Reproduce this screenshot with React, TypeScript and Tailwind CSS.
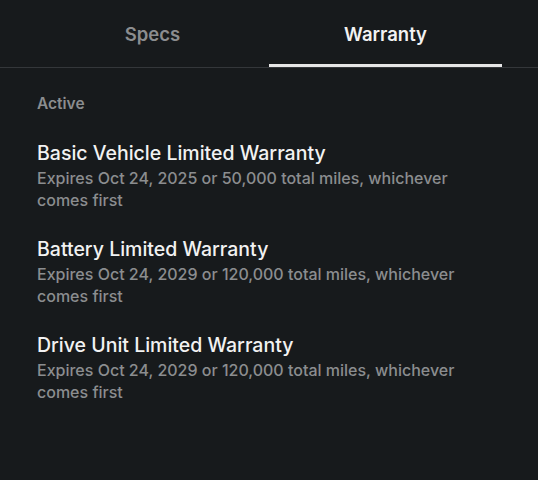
import React from "react";

const items = [
  { title: "Basic Vehicle Limited Warranty", sub: "Expires Oct 24, 2025 or 50,000 total miles, whichever comes first" },
  { title: "Battery Limited Warranty", sub: "Expires Oct 24, 2029 or 120,000 total miles, whichever comes first" },
  { title: "Drive Unit Limited Warranty", sub: "Expires Oct 24, 2029 or 120,000 total miles, whichever comes first" },
];

export default function App() {
  return (
    <div className="w-[538px] h-[480px] bg-[#171a1c] overflow-hidden" style={{ fontFamily: "Inter, 'Noto Sans', sans-serif" }}>
      <div className="border-b border-[#34373a]">
        <div className="flex px-[36px] h-[67px] pt-[2px]">
          <div className="flex-1 flex items-center justify-center text-[18.5px] font-semibold text-[#8b8d8f]">Specs</div>
          <div className="flex-1 relative flex items-center justify-center text-[18.5px] font-semibold text-[#f2f2f2]">
            Warranty
            <div className="absolute left-0 right-0 bottom-0 h-[3px] bg-[#e6e6e6]" />
          </div>
        </div>
      </div>
      <div className="px-[37px] pt-[26px]">
        <div className="text-[15.5px] font-semibold text-[#8b8d8f] leading-[20px]">Active</div>
        <div className="mt-[26px] flex flex-col gap-[25px]">
          {items.map((it) => (
            <div key={it.title}>
              <div className="text-[19.5px] font-medium text-[#f2f2f2] leading-[27px]">{it.title}</div>
              <div className="text-[16px] font-medium text-[#8b8d8f] leading-[22px] max-w-[464px]">{it.sub}</div>
            </div>
          ))}
        </div>
      </div>
    </div>
  );
}
